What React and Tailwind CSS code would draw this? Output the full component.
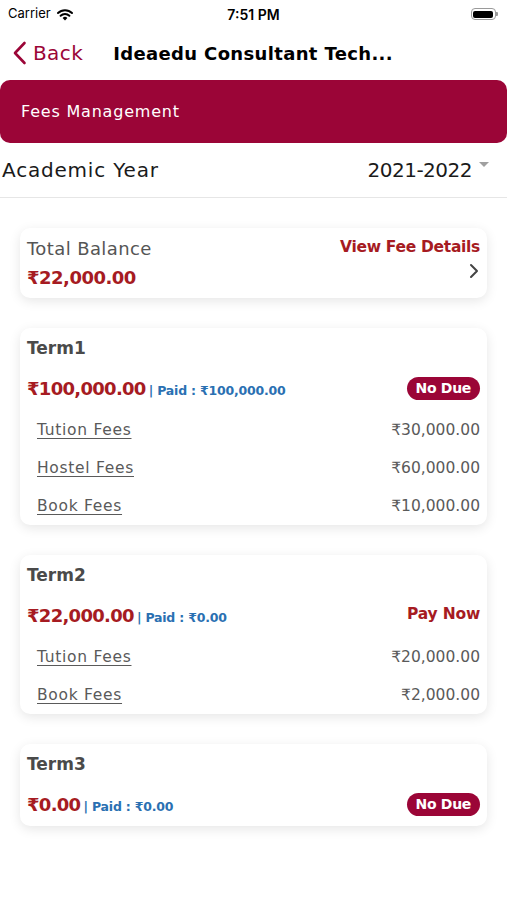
const terms = [
  {
    name: 'Term1',
    total: '₹100,000.00',
    paid: '₹100,000.00',
    status: 'due',
    fees: [
      ['Tution Fees', '₹30,000.00'],
      ['Hostel Fees', '₹60,000.00'],
      ['Book Fees', '₹10,000.00'],
    ],
  },
  {
    name: 'Term2',
    total: '₹22,000.00',
    paid: '₹0.00',
    status: 'pay',
    fees: [
      ['Tution Fees', '₹20,000.00'],
      ['Book Fees', '₹2,000.00'],
    ],
  },
  { name: 'Term3', total: '₹0.00', paid: '₹0.00', status: 'due', fees: [] },
];

const StatusBar = () => (
  <div className="h-[28px] flex items-center justify-between px-[8px] text-black">
    <div className="flex items-center gap-[5px] w-[120px]">
      <span className="text-[13px] font-['Inter',sans-serif]">Carrier</span>
      <svg width="18" height="13" viewBox="0 0 18 13">
        <path d="M9 12.5 L6.6 9.9 A3.4 3.4 0 0 1 11.4 9.9 Z" fill="#000" />
        <path d="M4.6 7.8 A6.3 6.3 0 0 1 13.4 7.8" stroke="#000" strokeWidth="2" fill="none" strokeLinecap="round" />
        <path d="M2 5 A10 10 0 0 1 16 5" stroke="#000" strokeWidth="2" fill="none" strokeLinecap="round" />
      </svg>
    </div>
    <span className="text-[14px] font-semibold font-['Inter',sans-serif]">7:51 PM</span>
    <div className="w-[120px] flex justify-end pr-[1px]">
      <div className="flex items-center">
        <div className="w-[25px] h-[12px] rounded-[4px] border border-[#9a9a9a] p-[1.5px]">
          <div className="w-full h-full bg-black rounded-[2px]" />
        </div>
        <div className="w-[2px] h-[4px] bg-[#9a9a9a] rounded-r-[1px]" />
      </div>
    </div>
  </div>
);

const Badge = () => (
  <span className="bg-[#9b0537] text-white text-[14px] font-bold rounded-full px-[9px] h-[23px] leading-[23px] tracking-[-0.3px]">
    No Due
  </span>
);

const TermCard = ({ term }) => (
  <div className="bg-white rounded-[10px] shadow-[0_3px_12px_rgba(0,0,0,0.10)] px-[7px] pt-[8px] pb-[8px]">
    <div className="h-[24px] leading-[24px] text-[17px] font-bold text-[#4a4a4a]">{term.name}</div>
    <div className="mt-[14px] h-[28px] flex items-center justify-between">
      <div className="flex items-baseline">
        <span className="text-[18px] font-bold text-[#a61b22] tracking-[-0.7px]">{term.total}</span>
        <span className="ml-[3px] text-[12.5px] font-bold text-[#2a70b2] tracking-[-0.2px]">| Paid : {term.paid}</span>
      </div>
      {term.status === 'due' ? (
        <Badge />
      ) : (
        <span className="text-[15.5px] font-bold text-[#a61b22] tracking-[-0.2px]">Pay Now</span>
      )}
    </div>
    {term.fees.length > 0 && (
      <div className="mt-[10px] -mb-[9px]">
        {term.fees.map(([label, amount]) => (
          <div key={label} className="h-[38px] flex items-center justify-between pl-[10px] text-[15.5px] text-[#5a5a5a]">
            <span className="underline underline-offset-[3px] tracking-[0.7px]">{label}</span>
            <span>{amount}</span>
          </div>
        ))}
      </div>
    )}
  </div>
);

export default function App() {
  return (
    <div className="w-[507px] h-[900px] bg-white font-['DejaVu_Sans',sans-serif] overflow-hidden">
      <StatusBar />
      <div className="h-[50px] flex items-center">
        <div className="flex items-center pl-[12px] text-[#9b0537]">
          <svg width="16" height="24" viewBox="0 0 16 24">
            <path d="M12.5 2 L3 12 L12.5 22" stroke="#9b0537" strokeWidth="2.6" fill="none" strokeLinecap="round" strokeLinejoin="round" />
          </svg>
          <span className="ml-[5px] text-[20px] tracking-[0.4px]">Back</span>
        </div>
        <span className="ml-[30px] text-[18px] font-bold text-black tracking-[0.35px]">Ideaedu Consultant Tech...</span>
      </div>
      <div className="mt-[2px] h-[63px] bg-[#9b0537] rounded-[10px] flex items-center px-[21px]">
        <span className="text-white text-[16px] tracking-[0.8px]">Fees Management</span>
      </div>
      <div className="h-[55px] flex items-center justify-between pl-[2px] pr-[18px] border-b border-[#e6e6e6]">
        <span className="text-[20px] text-[#1a1a1a] tracking-[0.8px]">Academic Year</span>
        <div className="flex items-center">
          <span className="text-[20px] text-[#1a1a1a] tracking-[-0.5px]">2021-2022</span>
          <svg width="10" height="6" viewBox="0 0 10 6" className="ml-[7px] -mt-[10px]">
            <path d="M0 0 L10 0 L5 5 Z" fill="#a0a0a0" />
          </svg>
        </div>
      </div>
      <div className="px-[20px] pt-[30px] flex flex-col gap-[30px]">
        <div className="bg-white rounded-[10px] shadow-[0_3px_12px_rgba(0,0,0,0.10)] h-[70px] px-[7px] pt-[8px] flex justify-between">
          <div className="flex flex-col">
            <span className="h-[26px] leading-[26px] text-[18px] text-[#555555] tracking-[0.4px]">Total Balance</span>
            <span className="mt-[2px] text-[18px] font-bold text-[#a61b22] tracking-[-0.5px]">₹22,000.00</span>
          </div>
          <div className="flex flex-col items-end">
            <span className="text-[15.5px] font-bold text-[#a61b22] tracking-[-0.3px]">View Fee Details</span>
            <svg width="10" height="16" viewBox="0 0 10 16" className="mt-[4px] mr-[1px]">
              <path d="M2 2 L8 8 L2 14" stroke="#444" strokeWidth="2" fill="none" strokeLinecap="round" strokeLinejoin="round" />
            </svg>
          </div>
        </div>
        {terms.map((t) => (
          <TermCard key={t.name} term={t} />
        ))}
      </div>
    </div>
  );
}
